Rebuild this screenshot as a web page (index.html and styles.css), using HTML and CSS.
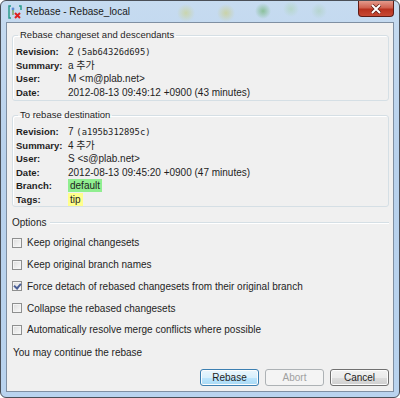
FILE: index.html
```html
<!DOCTYPE html>
<html lang="en">
<head>
    <meta charset="UTF-8">
    <title>Rebase - Rebase_local</title>
    <link rel="stylesheet" href="styles.css">
</head>
<body>
    <div class="window">
        <div class="titlebar">
            <svg class="app-icon" width="14" height="14" viewBox="0 0 14 14">
                <path d="M3 1 L1 1 L1 13 L3 13" fill="none" stroke="#2a9a8a" stroke-width="1.5"/>
                <path d="M11 1 L13 1 L13 5" fill="none" stroke="#2a9a8a" stroke-width="1.5"/>
                <circle cx="5" cy="4" r="1.4" fill="#5a8ad0"/>
                <path d="M5 5 L5 10" stroke="#6a9a40" stroke-width="1.2"/>
                <path d="M7 8 L12 13 M12 8 L7 13" stroke="#d22" stroke-width="2"/>
            </svg>
            <span class="title">Rebase - Rebase_local</span>
            <div class="close-btn">
                <svg width="12" height="10" viewBox="0 0 12 10">
                    <path d="M2 1 L10 9 M10 1 L2 9" stroke="#5a1a14" stroke-width="3.4"/>
                    <path d="M2 1 L10 9 M10 1 L2 9" stroke="#fff" stroke-width="2"/>
                </svg>
            </div>
        </div>

        <div class="client">
            <fieldset class="group">
                <legend>Rebase changeset and descendants</legend>
                <div class="info">
                    <span class="label">Revision:</span><span>2 <span class="hash">(5ab64326d695)</span></span>
                    <span class="label">Summary:</span><span>a 추가</span>
                    <span class="label">User:</span><span>M &lt;m@plab.net&gt;</span>
                    <span class="label">Date:</span><span>2012-08-13 09:49:12 +0900 (43 minutes)</span>
                </div>
            </fieldset>

            <fieldset class="group second">
                <legend>To rebase destination</legend>
                <div class="info">
                    <span class="label">Revision:</span><span>7 <span class="hash">(a195b312895c)</span></span>
                    <span class="label">Summary:</span><span>4 추가</span>
                    <span class="label">User:</span><span>S &lt;s@plab.net&gt;</span>
                    <span class="label">Date:</span><span>2012-08-13 09:45:20 +0900 (47 minutes)</span>
                    <span class="label">Branch:</span><span><span class="branch">default</span></span>
                    <span class="label">Tags:</span><span><span class="tag">tip</span></span>
                </div>
            </fieldset>

            <div class="options-head">
                <span>Options</span>
                <span class="rule"></span>
            </div>

            <ul class="options">
                <li><span class="check"></span>Keep original changesets</li>
                <li><span class="check"></span>Keep original branch names</li>
                <li><span class="check checked"></span>Force detach of rebased changesets from their original branch</li>
                <li><span class="check"></span>Collapse the rebased changesets</li>
                <li><span class="check"></span>Automatically resolve merge conflicts where possible</li>
            </ul>

            <p class="status">You may continue the rebase</p>

            <div class="buttons">
                <button class="btn default">Rebase</button>
                <button class="btn" disabled>Abort</button>
                <button class="btn">Cancel</button>
            </div>
        </div>
    </div>
</body>
</html>
```

FILE: styles.css
```css
body {
    margin: 0;
    font-family: "Liberation Sans", "Noto Sans CJK KR", sans-serif;
    font-size: 10px;
    color: #1e1e1e;
}

.window {
    width: 400px;
    height: 398px;
    box-sizing: border-box;
    border: 1px solid #4a4f57;
    border-radius: 6px;
    padding: 0 5px 5px 5px;
    background:
        radial-gradient(circle at 185px 12px, rgba(205, 210, 130, 0.6), transparent 9px),
        radial-gradient(circle at 225px 12px, rgba(205, 205, 120, 0.6), transparent 9px),
        radial-gradient(circle at 262px 10px, rgba(100, 175, 100, 0.6), transparent 8px),
        radial-gradient(circle at 290px 8px, rgba(160, 210, 150, 0.4), transparent 8px),
        radial-gradient(circle at 318px 10px, rgba(160, 205, 160, 0.4), transparent 8px),
        linear-gradient(#c6dbf0, #b8d1ec 40%, #b9d3ee);
    display: flex;
    flex-direction: column;
}

.titlebar {
    height: 21px;
    display: flex;
    align-items: center;
    padding-left: 2px;
}

.app-icon {
    margin-right: 4px;
    margin-top: 1px;
}

.title {
    font-size: 10px;
    color: #1a1a1a;
}

.close-btn {
    margin-left: auto;
    align-self: flex-start;
    width: 36px;
    height: 16px;
    box-sizing: border-box;
    border: 1px solid #5e1c16;
    border-top: none;
    border-radius: 0 0 4px 4px;
    background: linear-gradient(#e49a8c, #d0614f 45%, #b8321f 55%, #c74a34);
    display: flex;
    align-items: center;
    justify-content: center;
}

.client {
    flex: 1;
    background: #f0f0f0;
    border: 1px solid #7f8fa2;
    padding: 5px 4px 4px 5px;
    display: flex;
    flex-direction: column;
}

.group {
    margin: 0;
    padding: 3px 0 1px 3px;
    border: 1px solid #d5dfe5;
    border-radius: 3px;
    box-shadow: inset 1px 1px 0 #fff;
}

.group legend {
    padding: 0 2px;
    margin-left: 2px;
    line-height: 14px;
    font-size: 9.5px;
}

.second {
    margin-top: 7px;
    padding-bottom: 0;
}

.info {
    display: grid;
    grid-template-columns: 52px 1fr;
    grid-auto-rows: 13.5px;
    line-height: 13.5px;
}

.label {
    font-weight: bold;
    font-size: 9.5px;
}

.hash {
    font-family: "DejaVu Sans Mono", monospace;
    font-size: 8.8px;
}

.branch {
    background: #90ee90;
    padding: 1px 2px;
}

.tag {
    background: #ffff8c;
    padding: 1px 2px;
}

.options-head {
    margin-top: 9px;
    display: flex;
    align-items: center;
    line-height: 14px;
}

.rule {
    flex: 1;
    margin-left: 4px;
    border-top: 1px solid #d5dfe5;
    border-bottom: 1px solid #fff;
}

.options {
    list-style: none;
    margin: 2px 0 0 0;
    padding: 0;
}

.options li {
    height: 21.75px;
    display: flex;
    align-items: center;
}

.check {
    width: 10px;
    height: 10px;
    box-sizing: border-box;
    border: 1px solid #8e8f8f;
    background: linear-gradient(135deg, #dcdcdc, #fafafa);
    box-shadow: inset 0 0 0 1px #f4f4f4;
    margin-right: 5px;
    position: relative;
}

.checked::after {
    content: "";
    position: absolute;
    left: 2px;
    top: 0px;
    width: 3px;
    height: 5px;
    border: solid #4a5f97;
    border-width: 0 2px 2px 0;
    transform: rotate(40deg);
}

.status {
    margin: 5px 0 0 1px;
    line-height: 14px;
}

.buttons {
    margin-top: 9px;
    display: flex;
    justify-content: flex-end;
    gap: 6px;
}

.btn {
    width: 59px;
    height: 17px;
    padding: 0;
    font-family: inherit;
    font-size: 10px;
    color: #1e1e1e;
    border: 1px solid #707070;
    border-radius: 3px;
    background: linear-gradient(#f2f2f2, #ebebeb 50%, #dddddd 51%, #cfcfcf);
    box-shadow: inset 0 0 0 1px #fcfcfc;
}

.btn.default {
    border-color: #3c7fb1;
    background: linear-gradient(#eaf6fd, #d9f0fc 50%, #bee6fd 51%, #a7d9f5);
}

.btn:disabled {
    border-color: #adb2b5;
    background: #f4f4f4;
    color: #a0a0a0;
    box-shadow: none;
}
```
